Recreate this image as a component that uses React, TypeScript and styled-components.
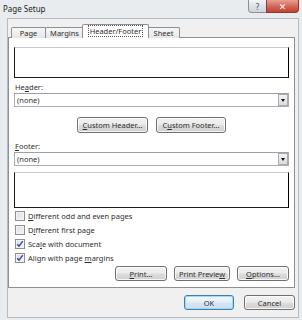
import React from "react";
import styled, { createGlobalStyle, css } from "styled-components";

const Global = createGlobalStyle`
  html, body { margin: 0; padding: 0; }
  body {
    width: 302px; height: 320px; overflow: hidden;
    font-family: "Noto Sans", "DejaVu Sans", sans-serif;
    font-size: 7.5px; color: #2e2e2e;
  }
  * { box-sizing: border-box; }
`;

const Window = styled.div`
  width: 302px; height: 320px;
  background: #e9ecef;
  display: flex; flex-direction: column;
`;

const TitleBar = styled.div`
  height: 18px; flex: none;
  display: flex; justify-content: space-between; align-items: flex-start;
`;

const Title = styled.div`
  padding: 3px 0 0 3px;
  font-size: 8px; line-height: 11px; color: #1e1e1e;
`;

const Caption = styled.div`
  display: flex; margin-right: 3px;
`;

const CapBtn = styled.div<{ $close?: boolean }>`
  height: 13px;
  display: flex; align-items: center; justify-content: center;
  border: 1px solid #8a8f96; border-top: none;
  ${(p) =>
    p.$close
      ? css`
          width: 33px; margin-left: -1px;
          border-color: #8d3a30;
          border-radius: 0 0 4px 0;
          background: linear-gradient(#e9a093, #d46a5a 50%, #c2412f);
          color: #fff; font-weight: bold; font-size: 9px;
        `
      : css`
          width: 19px;
          border-radius: 0 0 0 4px;
          background: linear-gradient(#f4f6f8, #dde2e8 50%, #cfd5dc);
          color: #4a5058; font-size: 8px;
        `}
`;

const Client = styled.div`
  flex: 1;
  margin: 0 3px 2px 7px;
  border: 1px solid #b5bcc4;
  background: #f0f0f0;
  display: flex; flex-direction: column;
  padding: 0 3px 0 0;
`;

const TabStrip = styled.div`
  height: 19px; flex: none;
  display: flex; align-items: flex-end;
  padding-left: 3px;
  margin-bottom: -1px;
  position: relative; z-index: 1;
`;

const Tab = styled.div<{ $active?: boolean; $w: number; $first?: boolean }>`
  width: ${(p) => p.$w}px;
  height: 11px;
  margin-left: ${(p) => (p.$first ? 0 : -1)}px;
  border: 1px solid #8c8f96; border-bottom: none;
  border-radius: 2px 2px 0 0;
  background: linear-gradient(#f7f7f7, #e6e6e6);
  display: flex; align-items: center; justify-content: center;
  line-height: 10px;
  white-space: nowrap;
  ${(p) =>
    p.$active &&
    css`
      height: 14px;
      margin: 0 -1px 0 -2px;
      background: #fff;
      position: relative;
      z-index: 2;
      align-items: flex-start;
      padding-top: 1px;
    `}
`;

const Focus = styled.span`
  outline: 1px dotted #555;
  outline-offset: 0;
  padding: 0 1px;
`;

const Panel = styled.div`
  height: 251px; flex: none;
  background: #fff;
  border: 1px solid #8c8f96;
  padding: 0 5px;
  display: flex; flex-direction: column;
`;

const Preview = styled.div<{ $h: number; $mt: number }>`
  height: ${(p) => p.$h}px;
  margin-top: ${(p) => p.$mt}px;
  border: 1px solid #1a1a1a;
  border-top-color: #c8c8c8;
  border-right-color: #000;
  background: #fff;
`;

const Label = styled.div<{ $mt: number }>`
  margin-top: ${(p) => p.$mt}px;
  line-height: 10px; height: 10px;
  padding-left: 1px;
`;

const Select = styled.div`
  height: 14px; margin-top: 1px;
  border: 1px solid #abadb3;
  border-top-color: #9da0a8;
  display: flex; align-items: center;
  padding-left: 2px;
  line-height: 10px;
`;

const SelectText = styled.span`
  flex: 1;
`;

const DropBtn = styled.div`
  width: 10px; height: 12px;
  border: 1px solid #a7acb3;
  background: linear-gradient(#f4f4f4, #dcdcdc);
  display: flex; align-items: center; justify-content: center;
`;

const Arrow = styled.div`
  width: 0; height: 0;
  border-left: 2.5px solid transparent;
  border-right: 2.5px solid transparent;
  border-top: 3px solid #111;
`;

const ButtonRow = styled.div<{ $mt: number; $justify: string; $gap: number }>`
  display: flex;
  margin-top: ${(p) => p.$mt}px;
  justify-content: ${(p) => p.$justify};
  gap: ${(p) => p.$gap}px;
`;

const Button = styled.div<{ $w: number; $h?: number; $default?: boolean }>`
  width: ${(p) => p.$w}px;
  height: ${(p) => p.$h ?? 16}px;
  border: 1px solid #707070;
  border-radius: 3px;
  background: linear-gradient(#f2f2f2 0%, #ebebeb 48%, #dddddd 52%, #cfcfcf 100%);
  box-shadow: inset 0 0 0 1px rgba(255, 255, 255, 0.8);
  display: flex; align-items: center; justify-content: center;
  line-height: 10px;
  white-space: nowrap;
  ${(p) =>
    p.$default &&
    css`
      border-color: #3c7fb1;
      box-shadow: inset 0 0 0 1px #a7d7f5;
      background: linear-gradient(#f0f7fc 0%, #e4f0f9 48%, #d5e7f5 52%, #c8dff1 100%);
    `}
`;

const U = styled.span`
  text-decoration: underline;
  text-underline-offset: 1px;
`;

const CheckList = styled.div`
  margin-top: 1px;
  display: flex; flex-direction: column;
`;

const CheckRow = styled.div`
  height: 14px;
  display: flex; align-items: center;
  gap: 3px;
  padding-left: 1px;
`;

const Box = styled.div`
  width: 10px; height: 10px;
  border: 1px solid #8e8f8f;
  background: linear-gradient(135deg, #dcdcdc, #f7f7f7);
  box-shadow: inset 0 0 0 1px #f4f4f4;
  display: flex; align-items: center; justify-content: center;
`;

const Footer = styled.div`
  display: flex; justify-content: flex-end;
  gap: 10px;
  margin-top: 7px;
`;

const Check = ({ checked, children }: { checked?: boolean; children: React.ReactNode }) => (
  <CheckRow>
    <Box>
      {checked && (
        <svg width="8" height="8" viewBox="0 0 8 8">
          <path d="M1.2 4.2 L3 6.2 L6.8 1.2" fill="none" stroke="#2a4fa0" strokeWidth="1.4" />
        </svg>
      )}
    </Box>
    <span>{children}</span>
  </CheckRow>
);

export default function App() {
  return (
    <>
      <Global />
      <Window>
        <TitleBar>
          <Title>Page Setup</Title>
          <Caption>
            <CapBtn>?</CapBtn>
            <CapBtn $close>✕</CapBtn>
          </Caption>
        </TitleBar>
        <Client>
          <TabStrip>
            <Tab $w={35} $first>Page</Tab>
            <Tab $w={39}>Margins</Tab>
            <Tab $w={67} $active>
              <Focus>Header/Footer</Focus>
            </Tab>
            <Tab $w={33}>Sheet</Tab>
          </TabStrip>
          <Panel>
            <Preview $h={31} $mt={9} />
            <Label $mt={4}>
              He<U>a</U>der:
            </Label>
            <Select>
              <SelectText>(none)</SelectText>
              <DropBtn>
                <Arrow />
              </DropBtn>
            </Select>
            <ButtonRow $mt={10} $justify="center" $gap={8}>
              <Button $w={71}>
                <span>
                  <U>C</U>ustom Header...
                </span>
              </Button>
              <Button $w={70}>
                <span>
                  C<U>u</U>stom Footer...
                </span>
              </Button>
            </ButtonRow>
            <Label $mt={8}>
              <U>F</U>ooter:
            </Label>
            <Select>
              <SelectText>(none)</SelectText>
              <DropBtn>
                <Arrow />
              </DropBtn>
            </Select>
            <Preview $h={36} $mt={6} />
            <CheckList>
              <Check>
                <U>D</U>ifferent odd and even pages
              </Check>
              <Check>
                D<U>i</U>fferent first page
              </Check>
              <Check checked>
                Sca<U>l</U>e with document
              </Check>
              <Check checked>
                Align with page <U>m</U>argins
              </Check>
            </CheckList>
            <ButtonRow $mt={1} $justify="flex-end" $gap={7}>
              <Button $w={52} $h={15}>
                <span>
                  <U>P</U>rint...
                </span>
              </Button>
              <Button $w={56} $h={15}>
                <span>
                  Print Previe<U>w</U>
                </span>
              </Button>
              <Button $w={52} $h={15}>
                <span>
                  <U>O</U>ptions...
                </span>
              </Button>
            </ButtonRow>
          </Panel>
          <Footer>
            <Button $w={50} $h={15} $default>
              OK
            </Button>
            <Button $w={51} $h={15}>
              Cancel
            </Button>
          </Footer>
        </Client>
      </Window>
    </>
  );
}
